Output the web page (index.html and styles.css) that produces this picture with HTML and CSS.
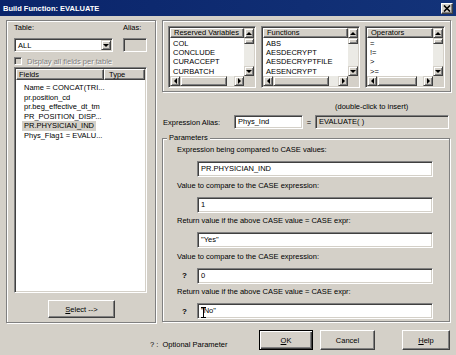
FILE: index.html
```html
<!DOCTYPE html>
<html lang="en">
<head>
    <meta charset="UTF-8">
    <title>Build Function: EVALUATE</title>
    <link rel="stylesheet" href="styles.css">
</head>
<body>
    <div class="dialog">
        <div class="titlebar">
            <span class="title">Build Function: EVALUATE</span>
            <span class="close-btn">
                <svg width="8" height="7" viewBox="0 0 8 7"><path d="M1 0.5 L7 6.5 M7 0.5 L1 6.5" stroke="#000" stroke-width="1.6"/></svg>
            </span>
        </div>

        <div class="main">
            <!-- left: table and fields -->
            <div class="group group-left">
                <div class="table-labels">
                    <span class="table-label">Table:</span>
                    <span>Alias:</span>
                </div>
                <div class="table-row">
                    <div class="combo sunken">
                        <span class="combo-text">ALL</span>
                        <span class="sb-btn combo-btn"><i class="tri tri-down"></i></span>
                    </div>
                    <div class="alias-box sunken"></div>
                </div>
                <div class="check-row">
                    <span class="checkbox sunken"></span>
                    <span class="disabled-text">Display all fields per table</span>
                </div>
                <div class="listview sunken">
                    <div class="lv-header">
                        <span class="lv-col lv-col-fields">Fields</span>
                        <span class="lv-col lv-col-type">Type</span>
                    </div>
                    <ul class="lv-rows">
                        <li>Name = CONCAT(TRI...</li>
                        <li>pr.position_cd</li>
                        <li>pr.beg_effective_dt_tm</li>
                        <li>PR_POSITION_DISP...</li>
                        <li><span class="selected">PR.PHYSICIAN_IND</span></li>
                        <li>Phys_Flag1 = EVALU...</li>
                    </ul>
                </div>
                <button class="btn btn-select"><u>S</u>elect --&gt;</button>
            </div>

            <!-- right: lists, alias, parameters -->
            <div class="right">
                <div class="group group-lists">
                    <div class="lb lb-reserved sunken">
                        <div class="lb-body">
                            <div class="lb-header">Reserved Variables</div>
                            <ul class="lb-items">
                                <li>COL</li>
                                <li>CONCLUDE</li>
                                <li>CURACCEPT</li>
                                <li>CURBATCH</li>
                                <li>CURREDROCK</li>
                            </ul>
                        </div>
                        <div class="vscroll">
                            <span class="sb-btn"><i class="tri tri-up"></i></span>
                            <span class="sb-thumb"></span>
                            <span class="sb-track"></span>
                            <span class="sb-btn"><i class="tri tri-down"></i></span>
                        </div>
                        <div class="hscroll">
                            <span class="sb-btn"><i class="tri tri-left"></i></span>
                            <span class="sb-thumb"></span>
                            <span class="sb-track"></span>
                            <span class="sb-btn"><i class="tri tri-right"></i></span>
                        </div>
                        <div class="corner"></div>
                    </div>

                    <div class="lb lb-functions sunken">
                        <div class="lb-body">
                            <div class="lb-header">Functions</div>
                            <ul class="lb-items">
                                <li>ABS</li>
                                <li>AESDECRYPT</li>
                                <li>AESDECRYPTFILE</li>
                                <li>AESENCRYPT</li>
                                <li>AESENCRYPTFILE</li>
                            </ul>
                        </div>
                        <div class="vscroll">
                            <span class="sb-btn"><i class="tri tri-up"></i></span>
                            <span class="sb-thumb"></span>
                            <span class="sb-track"></span>
                            <span class="sb-btn"><i class="tri tri-down"></i></span>
                        </div>
                        <div class="hscroll">
                            <span class="sb-btn"><i class="tri tri-left"></i></span>
                            <span class="sb-thumb"></span>
                            <span class="sb-track"></span>
                            <span class="sb-btn"><i class="tri tri-right"></i></span>
                        </div>
                        <div class="corner"></div>
                    </div>

                    <div class="lb lb-operators sunken">
                        <div class="lb-body">
                            <div class="lb-header">Operators</div>
                            <ul class="lb-items">
                                <li>=</li>
                                <li>!=</li>
                                <li>&gt;</li>
                                <li>&gt;=</li>
                                <li>&lt;</li>
                            </ul>
                        </div>
                        <div class="vscroll">
                            <span class="sb-btn"><i class="tri tri-up"></i></span>
                            <span class="sb-thumb"></span>
                            <span class="sb-track"></span>
                            <span class="sb-btn"><i class="tri tri-down"></i></span>
                        </div>
                        <div class="hscroll">
                            <span class="sb-btn"><i class="tri tri-left"></i></span>
                            <span class="sb-thumb"></span>
                            <span class="sb-track"></span>
                            <span class="sb-btn"><i class="tri tri-right"></i></span>
                        </div>
                        <div class="corner"></div>
                    </div>
                </div>

                <div class="hint">(double-click to insert)</div>

                <div class="alias-row">
                    <span class="alias-row-label">Expression Alias:</span>
                    <div class="field alias-input sunken">Phys_Ind</div>
                    <span class="equals">=</span>
                    <div class="field eval-box sunken">EVALUATE( )</div>
                </div>

                <fieldset class="params">
                    <legend>Parameters</legend>
                    <div class="param-label">Expression being compared to CASE values:</div>
                    <div class="param-row">
                        <span class="q"></span>
                        <div class="field sunken">PR.PHYSICIAN_IND</div>
                    </div>
                    <div class="param-label">Value to compare to the CASE expression:</div>
                    <div class="param-row">
                        <span class="q"></span>
                        <div class="field sunken">1</div>
                    </div>
                    <div class="param-label">Return value if the above CASE value = CASE expr:</div>
                    <div class="param-row">
                        <span class="q"></span>
                        <div class="field sunken">"Yes"</div>
                    </div>
                    <div class="param-label">Value to compare to the CASE expression:</div>
                    <div class="param-row">
                        <span class="q">?</span>
                        <div class="field sunken">0</div>
                    </div>
                    <div class="param-label">Return value if the above CASE value = CASE expr:</div>
                    <div class="param-row">
                        <span class="q">?</span>
                        <div class="field field-cursor sunken">"No"
                            <svg class="ibeam" width="5" height="11" viewBox="0 0 5 11"><path d="M0 0.5 H5 M2.5 0.5 V10.5 M0 10.5 H5" stroke="#000" stroke-width="1"/></svg>
                        </div>
                    </div>
                </fieldset>
            </div>
        </div>

        <div class="footer">
            <span class="note">? :&nbsp; Optional Parameter</span>
            <div class="buttons">
                <button class="btn btn-ok btn-default"><u>O</u>K</button>
                <button class="btn btn-cancel">Cancel</button>
                <button class="btn btn-help"><u>H</u>elp</button>
            </div>
        </div>
    </div>
</body>
</html>
```

FILE: styles.css
```css
* {
    margin: 0;
    padding: 0;
    box-sizing: border-box;
}

body {
    font-family: 'Liberation Sans', Arial, sans-serif;
    font-size: 7.5px;
    color: #000;
    background: #d4d0c8;
}

ul {
    list-style: none;
}

.dialog {
    width: 456px;
    height: 355px;
    background: #d4d0c8;
    display: flex;
    flex-direction: column;
    overflow: hidden;
}

/* title bar */
.titlebar {
    height: 16px;
    flex: none;
    display: flex;
    align-items: center;
    justify-content: space-between;
    padding: 0 3px;
    background: linear-gradient(to right, #0a246a, #133379);
}

.title {
    color: #fff;
    font-weight: bold;
}

.close-btn {
    width: 12px;
    height: 11px;
    display: flex;
    align-items: center;
    justify-content: center;
    background: #d4d0c8;
    border: 1px solid;
    border-color: #fff #404040 #404040 #fff;
    box-shadow: inset -1px -1px 0 #808080;
}

/* 3d edges */
.sunken {
    border: 1px solid;
    border-color: #808080 #fff #fff #808080;
    box-shadow: inset 1px 1px 0 #404040, inset -1px -1px 0 #d4d0c8;
    padding: 1px;
    background: #fff;
}

.group {
    border: 1px solid #808080;
    box-shadow: inset 1px 1px 0 #fff, 1px 1px 0 #fff;
}

.main {
    display: flex;
    gap: 6px;
    padding: 4px 0 0 6px;
    height: 307px;
    flex: none;
}

/* left group */
.group-left {
    width: 150px;
    height: 303px;
    padding: 2px 0 0 7px;
}

.table-labels {
    display: flex;
    height: 10px;
    line-height: 10px;
}

.table-label {
    width: 109px;
}

.table-row {
    display: flex;
    gap: 10px;
    margin-top: 5px;
    height: 14px;
}

.combo {
    width: 99px;
    display: flex;
    align-items: center;
    justify-content: space-between;
    padding: 1px 1px 1px 3px;
}

.combo-btn {
    width: 10px;
    height: 10px;
}

.alias-box {
    width: 24px;
    background: #d4d0c8;
}

.check-row {
    display: flex;
    align-items: center;
    gap: 5px;
    margin-top: 5px;
    height: 8px;
}

.checkbox {
    width: 8px;
    height: 8px;
    background: #d4d0c8;
}

.disabled-text {
    color: #808080;
    text-shadow: 1px 1px 0 #fff;
}

.listview {
    margin-top: 2px;
    width: 133px;
    height: 226px;
    display: flex;
    flex-direction: column;
}

.lv-header {
    display: flex;
    height: 11px;
    flex: none;
}

.lv-col {
    background: #d4d0c8;
    border: 1px solid;
    border-color: #fff #404040 #404040 #fff;
    box-shadow: inset -1px -1px 0 #808080;
    line-height: 9px;
}

.lv-col-fields {
    width: 88px;
    padding-left: 2px;
}

.lv-col-type {
    flex: 1;
    padding-left: 4px;
}

.lv-rows {
    padding: 3px 0 0 8px;
}

.lv-rows li {
    line-height: 9.6px;
    height: 9.6px;
    white-space: nowrap;
}

.selected {
    display: inline-block;
    background: #d4d0c8;
    padding: 0 2px;
    margin-left: -2px;
}

/* buttons */
.btn {
    font-family: inherit;
    font-size: 7.5px;
    color: #000;
    background: #d4d0c8;
    border: 1px solid;
    border-color: #fff #404040 #404040 #fff;
    box-shadow: inset -1px -1px 0 #808080, inset 1px 1px 0 #d4d0c8;
}

.btn-default {
    border-color: #000;
    box-shadow: inset 1px 1px 0 #fff, inset -1px -1px 0 #404040, inset -2px -2px 0 #808080;
}

.btn-select {
    margin: 7px 0 0 34px;
    width: 67px;
    height: 18px;
}

/* right column */
.right {
    width: 289px;
    display: flex;
    flex-direction: column;
}

.group-lists {
    height: 72px;
    display: flex;
    gap: 5px;
    padding: 5px 0 0 5px;
}

.lb {
    height: 62px;
    display: grid;
    grid-template-columns: 1fr 10px;
    grid-template-rows: 1fr 10px;
}

.lb-reserved {
    width: 88px;
}

.lb-functions {
    width: 99px;
}

.lb-operators {
    width: 80px;
}

.lb-body {
    overflow: hidden;
}

.lb-header {
    height: 10px;
    line-height: 8px;
    padding-left: 3px;
    white-space: nowrap;
    overflow: hidden;
    background: #d4d0c8;
    border: 1px solid;
    border-color: #fff #404040 #404040 #fff;
    box-shadow: inset -1px -1px 0 #808080;
}

.lb-items {
    padding: 1px 0 0 3px;
}

.lb-items li {
    line-height: 9.2px;
    white-space: nowrap;
}

.vscroll {
    display: flex;
    flex-direction: column;
    background: #ebeae5;
}

.hscroll {
    display: flex;
    background: #ebeae5;
}

.sb-btn {
    flex: none;
    width: 10px;
    height: 10px;
    display: flex;
    align-items: center;
    justify-content: center;
    background: #d4d0c8;
    border: 1px solid;
    border-color: #d4d0c8 #404040 #404040 #d4d0c8;
    box-shadow: inset 1px 1px 0 #fff, inset -1px -1px 0 #808080;
}

.sb-thumb {
    background: #d4d0c8;
    border: 1px solid;
    border-color: #d4d0c8 #404040 #404040 #d4d0c8;
    box-shadow: inset 1px 1px 0 #fff, inset -1px -1px 0 #808080;
}

.vscroll .sb-thumb {
    height: 6px;
    flex: none;
}

.hscroll .sb-thumb {
    flex: 6;
}

.sb-track {
    flex: 1;
}

.corner {
    background: #d4d0c8;
}

.tri {
    width: 0;
    height: 0;
    display: block;
}

.tri-up {
    border-left: 3px solid transparent;
    border-right: 3px solid transparent;
    border-bottom: 3px solid #000;
}

.tri-down {
    border-left: 3px solid transparent;
    border-right: 3px solid transparent;
    border-top: 3px solid #000;
}

.tri-left {
    border-top: 3px solid transparent;
    border-bottom: 3px solid transparent;
    border-right: 3px solid #000;
}

.tri-right {
    border-top: 3px solid transparent;
    border-bottom: 3px solid transparent;
    border-left: 3px solid #000;
}

.hint {
    margin-top: 10px;
    padding-left: 173px;
    line-height: 10px;
    height: 10px;
}

.alias-row {
    margin-top: 3px;
    height: 14px;
    display: flex;
    align-items: center;
}

.alias-row-label {
    width: 72px;
    padding-left: 1px;
}

.field {
    line-height: 10px;
    padding: 1px 3px;
    white-space: nowrap;
    overflow: hidden;
    display: flex;
    align-items: center;
}

.alias-input {
    width: 69px;
    height: 14px;
}

.equals {
    width: 12px;
    text-align: center;
}

.eval-box {
    width: 134px;
    height: 14px;
    background: #d4d0c8;
}

/* parameters */
.params {
    margin-top: 4px;
    width: 288px;
    border: 1px solid #808080;
    box-shadow: inset 1px 1px 0 #fff, 1px 1px 0 #fff;
    padding: 1px 0 2px 0;
}

.params legend {
    margin-left: 4px;
    padding: 0 2px;
    line-height: 10px;
    background: #d4d0c8;
}

.param-label {
    padding-left: 14px;
    height: 12px;
    line-height: 12px;
    margin-top: 2.5px;
}

.params legend + .param-label {
    margin-top: 0;
}

.param-row {
    display: flex;
    align-items: center;
    margin-top: 5px;
    height: 16px;
}

.q {
    width: 34px;
    padding-left: 19px;
    font-weight: bold;
    font-size: 8px;
}

.param-row .field {
    width: 236px;
    height: 16px;
}

/* mouse pointer resting over the last field */
.field-cursor {
    position: relative;
}

.ibeam {
    position: absolute;
    left: 3px;
    top: 3px;
}

/* footer */
.footer {
    flex: 1;
    display: flex;
    padding-left: 150px;
}

.note {
    width: 109px;
    margin-top: 17px;
    line-height: 10px;
    height: 10px;
    white-space: nowrap;
}

.buttons {
    display: flex;
    margin-top: 7px;
}

.buttons .btn {
    height: 20px;
}

.btn-ok {
    width: 54px;
}

.btn-cancel {
    width: 55px;
    margin-left: 7px;
}

.btn-help {
    width: 48px;
    margin-left: 27px;
}
```
